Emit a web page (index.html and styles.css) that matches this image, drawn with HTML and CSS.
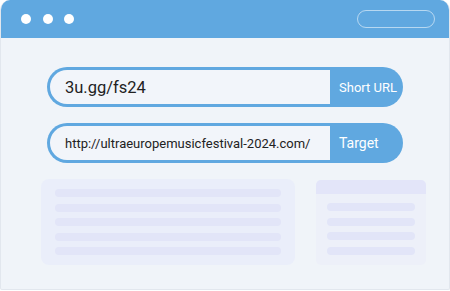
FILE: index.html
```html
<!DOCTYPE html>
<html lang="en">
<head>
    <meta charset="UTF-8">
    <meta name="viewport" content="width=device-width, initial-scale=1.0">
    <title>Short URL</title>
    <link rel="stylesheet" href="styles.css">
</head>
<body>
    <div class="window">
        <div class="titlebar">
            <div class="dots">
                <span class="dot"></span>
                <span class="dot"></span>
                <span class="dot"></span>
            </div>
            <div class="search"></div>
        </div>
        <div class="content">
            <div class="field">
                <div class="value big">3u.gg/fs24</div>
                <div class="label">Short URL</div>
            </div>
            <div class="field">
                <div class="value">http://ultraeuropemusicfestival-2024.com/</div>
                <div class="label label-lg">Target</div>
            </div>
            <div class="cards">
                <div class="card-main">
                    <div class="bar"></div>
                    <div class="bar"></div>
                    <div class="bar"></div>
                    <div class="bar"></div>
                    <div class="bar"></div>
                </div>
                <div class="card-side">
                    <div class="card-head"></div>
                    <div class="card-list">
                        <div class="bar"></div>
                        <div class="bar"></div>
                        <div class="bar"></div>
                        <div class="bar"></div>
                    </div>
                </div>
            </div>
        </div>
    </div>
</body>
</html>
```

FILE: styles.css
```css
body {
    margin: 0;
    background: #ffffff;
    font-family: Roboto, "Liberation Sans", sans-serif;
}

.window {
    width: 450px;
    height: 290px;
    box-sizing: border-box;
    background: #f0f4f9;
    border: 1px solid #e2e7ee;
    border-top: none;
    border-radius: 10px 10px 2px 2px;
    overflow: hidden;
}

.titlebar {
    height: 38px;
    background: #60a8e0;
    display: flex;
    align-items: center;
    justify-content: space-between;
    padding: 0 14px 0 20px;
}

.dots {
    display: flex;
    gap: 11.5px;
}

.dot {
    width: 10px;
    height: 10px;
    border-radius: 50%;
    background: #fff;
}

.search {
    width: 76px;
    height: 16px;
    border: 1px solid rgba(255, 255, 255, 0.55);
    border-radius: 9px;
    margin-top: -1px;
}

.content {
    padding: 29px 0 0 46px;
}

/* blue pill, light value area sits inside it */
.field {
    width: 356px;
    height: 40px;
    box-sizing: border-box;
    padding: 3px 0 3px 3px;
    border-radius: 20px;
    display: flex;
    margin-bottom: 16px;
    background: #60a8e0;
}

.value {
    flex: 1;
    display: flex;
    align-items: center;
    padding-left: 15px;
    font-size: 13px;
    color: #222;
    background: #f2f5fa;
    border-radius: 17px 0 0 17px;
}

.value.big {
    font-size: 16.5px;
}

.label {
    width: 73px;
    color: #fff;
    font-size: 13px;
    display: flex;
    align-items: center;
    padding-left: 9px;
    box-sizing: border-box;
}

.label-lg {
    font-size: 14px;
}

.cards {
    display: flex;
    gap: 21px;
    margin: 3px 0 0 -6px;
}

.card-main {
    width: 254px;
    box-sizing: border-box;
    padding: 10px 14px;
    background: #eaeefa;
    border-radius: 8px;
    display: flex;
    flex-direction: column;
    gap: 6.5px;
}

.bar {
    height: 8px;
    border-radius: 4px;
    background: #e2e5f8;
}

.card-side {
    width: 110px;
    height: 85px;
    margin-top: 1px;
    background: #edf0f9;
    border-radius: 5px;
    overflow: hidden;
}

.card-head {
    height: 14px;
    background: #e3e5f9;
}

.card-list {
    padding: 9px 11px 10px;
    display: flex;
    flex-direction: column;
    gap: 6.5px;
}
```
